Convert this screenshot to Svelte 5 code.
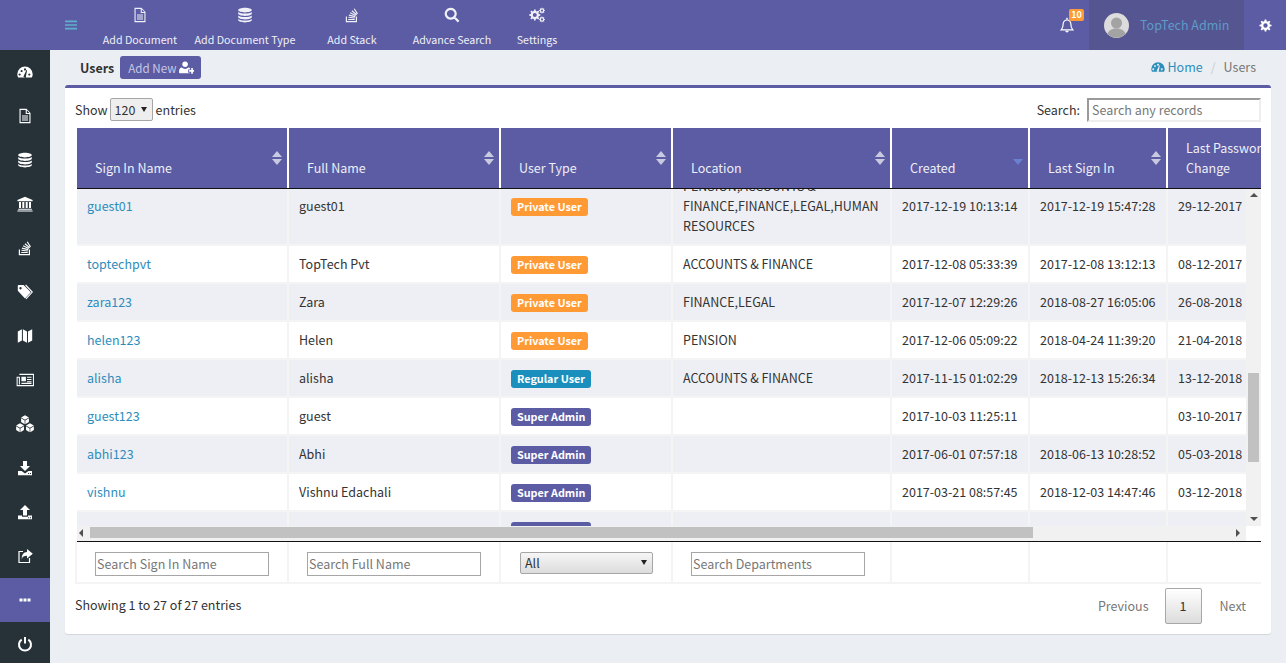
<script lang="ts">
  function gear(cx: number, cy: number, r: number, teeth = 8) {
    const pts: string[] = [];
    const step = (Math.PI * 2) / teeth;
    for (let i = 0; i < teeth; i++) {
      const a = i * step;
      const spots: [number, number][] = [
        [-0.3, 0.74],
        [-0.18, 1],
        [0.18, 1],
        [0.3, 0.74]
      ];
      for (const [o, k] of spots) {
        pts.push(`${(cx + Math.cos(a + o * step) * r * k).toFixed(2)} ${(cy + Math.sin(a + o * step) * r * k).toFixed(2)}`);
      }
    }
    const h = r * 0.36;
    return `M${pts.join('L')}zM${cx - h} ${cy}a${h} ${h} 0 1 0 ${h * 2} 0a${h} ${h} 0 1 0 ${-h * 2} 0z`;
  }

  function cube(x: number, y: number, r: number) {
    const w = r * 0.87;
    const top = `M${x} ${y - r}L${x + w} ${y - r / 2}L${x} ${y - 0.05}L${x - w} ${y - r / 2}z`;
    const left = `M${x - w} ${y - r / 2 + 0.6}L${x - 0.3} ${y + 0.5}V${y + r}L${x - w} ${y + r / 2}z`;
    const right = `M${x + w} ${y - r / 2 + 0.6}L${x + 0.3} ${y + 0.5}V${y + r}L${x + w} ${y + r / 2}z`;
    return top + left + right;
  }

  // f = filled path (evenodd), s = stroked path
  const icons: Record<string, { f?: string; s?: string; w?: number }> = {
    dash: {
      f: 'M8 2.500A7.700 7.700 0 0 0 .3 10.200c0 1.300.3 2.400.9 3.300h13.600c.6-.9.9-2 .9-3.300A7.700 7.700 0 0 0 8 2.500zM2.600 9.400a1.100 1.100 0 1 0 .01 0zM4.600 5.900a1.100 1.100 0 1 0 .01 0zM8 4.300a1.100 1.100 0 1 0 .01 0zM12.300 9.400a1.100 1.100 0 1 0 .01 0zM6.900 11.400 9.400 6l.7.3L9 11.900a1.200 1.200 0 1 1-2.100-.5z'
    },
    file: {
      f: 'M2.500.8h7L13.500 5v10.200h-11zM3.600 1.900v12.200h8.800V6H8.700V1.900zM9.800 2.200V4.900h2.600zM5 7.400h6v1H5zM5 9.400h6v1H5zM5 11.400h6v1H5z'
    },
    db: {
      f: 'M8 .8c3.800 0 6.800 1 6.800 2.300S11.800 5.400 8 5.400 1.200 4.400 1.200 3.100 4.200.8 8 .8zM1.200 4.900C2.500 6 5 6.500 8 6.500s5.500-.5 6.800-1.600v1.700c0 1.300-3 2.400-6.800 2.400S1.200 7.900 1.200 6.600zM1.200 8.400C2.500 9.500 5 10 8 10s5.500-.5 6.800-1.600v1.700c0 1.300-3 2.400-6.800 2.400s-6.800-1.100-6.800-2.400zM1.200 11.900c1.300 1.100 3.800 1.600 6.800 1.600s5.500-.5 6.800-1.600v1.200c0 1.300-3 2.300-6.800 2.300s-6.800-1-6.800-2.300z'
    },
    bank: {
      f: 'M8 .8 15.600 4v1.200H.4V4zM2 6h2v6H2zM5.300 6h2v6h-2zM8.700 6h2v6h-2zM12 6h2v6h-2zM1.200 12.800h13.600v1H1.200zM.4 14.400h15.200v1.200H.4z'
    },
    stack: {
      f: 'M1.800 9.500H3v4.500h8.800V9.500H13v5.700H1.800z',
      s: 'M4.200 12.500h6.500M4.400 10.300l6.400.7M4.900 8.100l6.300 1.500M6.100 5.800l5.700 2.700M7.900 3.700l4.800 4M10.200 1.800l3.300 5.100',
      w: 1.150
    },
    tag: {
      f: 'M.8 1.700v5L8 14.500 13.800 8.300 6.600.9H1.600a.8.800 0 0 0-.8.800zM3.500 3a1.200 1.200 0 1 0 .01 0z',
      s: 'M8.600 1l6.700 7L9 14.800',
      w: 1.100
    },
    map: { f: 'M.8 3.400 4.900 1.300V12.600L.8 14.700zM5.900 1.300 10 3.400V14.700L5.900 12.600zM11 3.400 15.200 1.300V12.600L11 14.700z' },
    news: {
      f: 'M4.800 5h4v4h-4zM9.800 5h4v1h-4zM9.800 7h4v1h-4zM9.800 9h4v1h-4zM4.800 10.500h9v1h-9z',
      s: 'M3 3h12.500v10H1V5.500h2V12',
      w: 0.9
    },
    cubes: { f: cube(8, 4.3, 4) + cube(3.6, 11.4, 4) + cube(12.4, 11.4, 4) },
    down: {
      f: 'M6 1h4v5h3l-5 5-5-5h3zM1 11h3.600L8 13.500 11.400 11H15v4.200H1zM11.100 13h1v1h-1zM13 13h1v1h-1z'
    },
    up: {
      f: 'M8 1l5 5h-3v5.500H6V6H3zM1 11.500h4v1.300h6v-1.300h4v3.700H1zM11.100 13.200h1v1h-1zM13 13.200h1v1h-1z'
    },
    share: {
      f: 'M10 1l5.800 4.800L10 10.600V7.800c-3 0-4.700 1-5.200 3.400C4.500 7 6.500 4.200 10 4z',
      s: 'M6 3.500H2v11h10.500V10',
      w: 1.2
    },
    dots: { f: 'M2.500 6.500h3v3h-3zM6.500 6.500h3v3h-3zM10.500 6.500h3v3h-3z' },
    power: { s: 'M4.700 3.600a6 6 0 1 0 6.600 0M8 1v6.500', w: 2 },
    bell: {
      f: 'M6.300 13.800h3.400a1.700 1.700 0 0 1-3.400 0zM7.300.8h1.400v2H7.300z',
      s: 'M2.200 12.800c1.500-1.500 2-3.200 2-6A3.700 3.700 0 0 1 8 3a3.700 3.700 0 0 1 3.800 3.800c0 2.800.5 4.500 2 6z',
      w: 1.2
    },
    cog: { f: gear(8, 8, 7.5) },
    cogs: { f: gear(5.8, 8, 5.6) + gear(13, 3.6, 3) + gear(13, 12.4, 3) },
    bars: { f: 'M0 2h16v2.200H0zM0 6.900h16v2.200H0zM0 11.800h16V14H0z' },
    search: { s: 'M6.700 1.800a4.900 4.900 0 1 0 .01 0zM10.300 10.300l4.300 4.300', w: 2.2 },
    addUser: {
      f: 'M6.500 1.500a3 3 0 1 0 .01 0zM1 14c-.6 0-1-.4-1-1 0-3 1-5 3-5 1 1 2.200 1.500 3.500 1.500S9 9 10 8c.7 0 1.200.2 1.700.6V10H9.800v3.500h2v.5zM13 8.500h1.800v2.200H17v1.800h-2.200v2.200H13v-2.200h-2.200v-1.800H13z'
    }
  };

  const navItems = [
    { icon: 'file', label: 'Add Document' },
    { icon: 'db', label: 'Add Document Type' },
    { icon: 'stack', label: 'Add Stack' },
    { icon: 'search', label: 'Advance Search' },
    { icon: 'cogs', label: 'Settings' }
  ];

  const sideItems = ['dash', 'file', 'db', 'bank', 'stack', 'tag', 'map', 'news', 'cubes', 'down', 'up', 'share', 'dots', 'power'];
  const bigSideIcons = ['news', 'cubes'];

  const columns = [
    { label: 'Sign In Name', sort: 'both' },
    { label: 'Full Name', sort: 'both' },
    { label: 'User Type', sort: 'both' },
    { label: 'Location', sort: 'both' },
    { label: 'Created', sort: 'desc' },
    { label: 'Last Sign In', sort: 'both' }
  ];

  const PRIVATE = { text: 'Private User', cls: 'orange' };
  const REGULAR = { text: 'Regular User', cls: 'blue' };
  const ADMIN = { text: 'Super Admin', cls: 'purple' };

  const users = [
    { id: 'guest01', name: 'guest01', type: PRIVATE, loc: 'PENSION,ACCOUNTS & FINANCE,FINANCE,LEGAL,HUMAN RESOURCES', created: '2017-12-19 10:13:14', signin: '2017-12-19 15:47:28', pwd: '29-12-2017' },
    { id: 'toptechpvt', name: 'TopTech Pvt', type: PRIVATE, loc: 'ACCOUNTS & FINANCE', created: '2017-12-08 05:33:39', signin: '2017-12-08 13:12:13', pwd: '08-12-2017' },
    { id: 'zara123', name: 'Zara', type: PRIVATE, loc: 'FINANCE,LEGAL', created: '2017-12-07 12:29:26', signin: '2018-08-27 16:05:06', pwd: '26-08-2018' },
    { id: 'helen123', name: 'Helen', type: PRIVATE, loc: 'PENSION', created: '2017-12-06 05:09:22', signin: '2018-04-24 11:39:20', pwd: '21-04-2018' },
    { id: 'alisha', name: 'alisha', type: REGULAR, loc: 'ACCOUNTS & FINANCE', created: '2017-11-15 01:02:29', signin: '2018-12-13 15:26:34', pwd: '13-12-2018' },
    { id: 'guest123', name: 'guest', type: ADMIN, loc: '', created: '2017-10-03 11:25:11', signin: '', pwd: '03-10-2017' },
    { id: 'abhi123', name: 'Abhi', type: ADMIN, loc: '', created: '2017-06-01 07:57:18', signin: '2018-06-13 10:28:52', pwd: '05-03-2018' },
    { id: 'vishnu', name: 'Vishnu Edachali', type: ADMIN, loc: '', created: '2017-03-21 08:57:45', signin: '2018-12-03 14:47:46', pwd: '03-12-2018' },
    { id: '', name: '', type: ADMIN, loc: '', created: '', signin: '', pwd: '' }
  ];
</script>

{#snippet icon(name: string, size = 16)}
  <svg class="icon" width={size} height={size} viewBox="0 0 16 16" aria-hidden="true">
    {#if icons[name].f}
      <path d={icons[name].f} fill="currentColor" fill-rule="evenodd" />
    {/if}
    {#if icons[name].s}
      <path d={icons[name].s} fill="none" stroke="currentColor" stroke-width={icons[name].w} />
    {/if}
  </svg>
{/snippet}

{#snippet colgroup()}
  <colgroup>
    <col class="c-wide" />
    <col class="c-wide" />
    <col class="c-type" />
    <col class="c-loc" />
    <col class="c-date" />
    <col class="c-date" />
    <col class="c-last" />
  </colgroup>
{/snippet}

<div class="page">
  <header class="topbar">
    <button class="toggle" aria-label="Toggle menu">{@render icon('bars', 12)}</button>
    <nav class="quick">
      {#each navItems as item}
        <a class="quick-item" href="#top">
          {@render icon(item.icon, 16)}
          <span>{item.label}</span>
        </a>
      {/each}
    </nav>
    <div class="topbar-right">
      <div class="bell">
        {@render icon('bell', 16)}
        <span class="bell-count">10</span>
      </div>
      <div class="user">
        <svg class="avatar" width="25" height="25" viewBox="0 0 25 25" aria-hidden="true">
          <circle cx="12.5" cy="12.5" r="12.5" fill="#dcdcdc" />
          <circle cx="12.5" cy="10" r="5.5" fill="#a3a3a3" />
          <path d="M3.500 21c1-4 5-5.500 9-5.500s8 1.500 9 5.500a12.500 12.500 0 0 1-18 0z" fill="#a3a3a3" />
        </svg>
        <span>TopTech Admin</span>
      </div>
      <div class="settings">{@render icon('cog', 13)}</div>
    </div>
  </header>

  <div class="main">
    <aside class="sidebar">
      {#each sideItems as name}
        <div class="side-item" class:active={name === 'dots'}>
          {@render icon(name, bigSideIcons.includes(name) ? 18 : 16)}
        </div>
      {/each}
    </aside>

    <section class="content">
      <div class="titlebar">
        <strong>Users</strong>
        <button class="add-new">Add New {@render icon('addUser', 15)}</button>
        <ol class="crumbs">
          <li class="home">{@render icon('dash', 14)} Home</li>
          <li class="sep">/</li>
          <li>Users</li>
        </ol>
      </div>

      <div class="card">
        <div class="controls">
          <div class="length">
            Show
            <span class="select small"><select><option>120</option></select></span>
            entries
          </div>
          <label class="search">
            Search:
            <input class="search-input" placeholder="Search any records" />
          </label>
        </div>

        <div class="grid">
          <div class="grid-head">
            <table>
              {@render colgroup()}
              <thead>
                <tr>
                  {#each columns as col}
                    <th class={col.sort === 'both' ? 'sort-both' : 'sort-desc'}>{col.label}</th>
                  {/each}
                  <th>Last Password<br />Change</th>
                </tr>
              </thead>
            </table>
          </div>

          <div class="grid-body">
            <div class="viewport">
              <table>
                {@render colgroup()}
                <tbody>
                  {#each users as user}
                    <tr>
                      <td><a href="#top">{user.id}</a></td>
                      <td>{user.name}</td>
                      <td><span class="badge {user.type.cls}">{user.type.text}</span></td>
                      <td>{user.loc}</td>
                      <td>{user.created}</td>
                      <td>{user.signin}</td>
                      <td>{user.pwd}</td>
                    </tr>
                  {/each}
                </tbody>
              </table>
            </div>
            <div class="vbar">
              <i class="arrow a-up"></i>
              <i class="thumb"></i>
              <i class="arrow a-down"></i>
            </div>
            <div class="hbar">
              <i class="arrow a-left"></i>
              <i class="thumb"></i>
              <i class="arrow a-right"></i>
            </div>
          </div>

          <div class="grid-foot">
            <table>
              {@render colgroup()}
              <tfoot>
                <tr>
                  <td><input placeholder="Search Sign In Name" /></td>
                  <td><input placeholder="Search Full Name" /></td>
                  <td><span class="select wide"><select><option>All</option></select></span></td>
                  <td><input placeholder="Search Departments" /></td>
                  <td></td>
                  <td></td>
                  <td></td>
                </tr>
              </tfoot>
            </table>
          </div>
        </div>

        <div class="grid-info">
          <div class="info-text">Showing 1 to 27 of 27 entries</div>
          <div class="pager">
            <span>Previous</span>
            <span class="page-current">1</span>
            <span>Next</span>
          </div>
        </div>
      </div>
    </section>
  </div>
</div>

<style>
  :global(body) {
    margin: 0;
    overflow: hidden;
    background: #ebeff3;
  }

  .page {
    height: 663px;
    display: flex;
    flex-direction: column;
    overflow: hidden;
    font-family: 'Noto Sans CJK SC', 'Open Sans', sans-serif;
    font-size: 12.5px;
    line-height: 20px;
    color: #333;
  }

  .icon {
    display: block;
    flex: none;
  }

  /* top bar */
  .topbar {
    height: 50px;
    flex: none;
    display: flex;
    background: #5b5ca3;
    color: #fff;
  }

  .toggle {
    width: 92px;
    padding: 0 15px 0 65px;
    border: 0;
    background: none;
    color: #5fb0cc;
  }

  .quick {
    display: grid;
    grid-template-columns: 96px 114px 100px 100px 70px;
  }

  .quick-item {
    display: flex;
    flex-direction: column;
    align-items: center;
    padding-top: 7px;
    gap: 8px;
    color: #f0f0f8;
    font-size: 10.7px;
    line-height: 18px;
    text-decoration: none;
    white-space: nowrap;
  }

  .topbar-right {
    margin-left: auto;
    display: flex;
    align-items: center;
    height: 100%;
  }

  .bell {
    position: relative;
    width: 43px;
    padding-left: 13px;
    box-sizing: border-box;
  }

  .bell-count {
    position: absolute;
    left: 23px;
    top: -8px;
    width: 15px;
    height: 12px;
    border-radius: 2px;
    background: #ff9a35;
    font-size: 9px;
    font-weight: 700;
    line-height: 12px;
    text-align: center;
  }

  .user {
    width: 155px;
    height: 100%;
    box-sizing: border-box;
    padding-left: 15px;
    display: flex;
    align-items: center;
    gap: 11px;
    background: #555592;
    color: #5b9cc8;
  }

  .settings {
    width: 42px;
    display: flex;
    justify-content: center;
  }

  /* sidebar */
  .main {
    flex: 1;
    display: flex;
    min-height: 0;
  }

  .sidebar {
    width: 50px;
    flex: none;
    background: #263238;
    color: #fff;
  }

  .side-item {
    height: 44px;
    display: flex;
    align-items: center;
    justify-content: center;
  }

  .side-item.active {
    background: #5b5ca3;
  }

  /* content */
  .content {
    flex: 1;
    min-width: 0;
    padding: 0 15px;
  }

  .titlebar {
    height: 35px;
    padding: 0 15px;
    display: flex;
    align-items: center;
    gap: 6px;
  }

  .add-new {
    height: 23px;
    padding: 0 7px 0 8px;
    display: flex;
    align-items: center;
    gap: 3px;
    border: 0;
    border-radius: 3px;
    background: #5b5ca3;
    color: #c6c7e4;
    font: inherit;
    font-size: 11.6px;
  }

  .add-new .icon {
    color: #fff;
  }

  .crumbs {
    margin: 0 0 0 auto;
    padding: 0 0 1px;
    display: flex;
    align-items: center;
    gap: 8px;
    list-style: none;
    color: #777;
  }

  .home {
    display: flex;
    align-items: center;
    gap: 3px;
    color: #2e8dbb;
  }

  .sep {
    color: #ccc;
  }

  .card {
    height: 549px;
    box-sizing: border-box;
    padding: 10px 10px 0;
    border-top: 3px solid #5b5ca3;
    border-radius: 3px;
    background: #fff;
    box-shadow: 0 1px 1px rgba(0, 0, 0, 0.1);
  }

  .controls {
    height: 24px;
    display: flex;
    justify-content: space-between;
    align-items: center;
  }

  .length,
  .search {
    display: flex;
    align-items: center;
    gap: 3px;
  }

  .length {
    padding-bottom: 1px;
  }

  .search {
    gap: 7px;
  }

  .search-input {
    width: 174px;
    height: 24px;
    box-sizing: border-box;
    padding: 0 3px 2px;
    border: 2px solid;
    border-color: #9a9a9a #eee #eee #9a9a9a;
    font: inherit;
  }

  input::placeholder {
    color: #777;
    opacity: 1;
  }

  .select {
    position: relative;
    display: inline-block;
  }

  .select select {
    display: block;
    width: 100%;
    appearance: none;
    box-sizing: border-box;
    padding: 0 0 0 4px;
    border: 1px solid #a6a6a6;
    border-radius: 2px;
    background: linear-gradient(#f6f6f6, #dcdcdc);
    color: #333;
    font: inherit;
  }

  .select::after {
    content: '';
    position: absolute;
    right: 6px;
    top: 50%;
    margin-top: -3px;
    border: 3px solid transparent;
    border-bottom: 0;
    border-top: 5px solid #222;
  }

  .select.small {
    width: 43px;
    height: 23px;
    margin-left: -1px;
  }

  .select.small select {
    height: 23px;
    background: #eee;
  }

  .select.wide {
    display: block;
    width: 133px;
    height: 22px;
    margin-left: 1px;
  }

  .select.wide select {
    height: 22px;
  }

  /* table */
  .grid {
    margin: 6px 0 0 2px;
    width: 1184px;
  }

  table {
    width: 1412px;
    table-layout: fixed;
    border-collapse: separate;
    border-spacing: 0;
  }

  .c-wide {
    width: 212px;
  }

  .c-type {
    width: 172px;
  }

  .c-loc {
    width: 219px;
  }

  .c-date {
    width: 138px;
  }

  .c-last {
    width: 321px;
  }

  .grid-head {
    height: 61px;
    overflow: hidden;
    border-bottom: 1px solid #111;
    box-sizing: border-box;
  }

  th {
    position: relative;
    box-sizing: border-box;
    height: 60px;
    padding: 0 18px 10px;
    border-right: 2px solid #fff;
    background: #5b5ca3;
    color: #eeeef8;
    font-weight: 400;
    text-align: left;
    vertical-align: bottom;
  }

  th.sort-both::before,
  th.sort-both::after,
  th.sort-desc::after {
    content: '';
    position: absolute;
    right: 5px;
    border: 5px solid transparent;
  }

  th.sort-both::before {
    top: 23px;
    border-top: 0;
    border-bottom: 6px solid #c9cadf;
  }

  th.sort-both::after {
    top: 31px;
    border-bottom: 0;
    border-top: 6px solid #c9cadf;
  }

  th.sort-desc::after {
    top: 31px;
    border-bottom: 0;
    border-top: 6px solid #6a80d0;
  }

  .grid-body {
    position: relative;
    height: 352px;
    overflow: hidden;
  }

  .viewport {
    width: 1169px;
    height: 337px;
    overflow: hidden;
  }

  .viewport table {
    margin-top: -21px;
  }

  .viewport td {
    padding: 8px 10px;
    border-right: 2px solid #f4f4f4;
    border-bottom: 2px solid #f4f4f4;
    vertical-align: middle;
  }

  .viewport tr:nth-child(odd) td {
    background: #eeeff4;
  }

  .viewport td a {
    color: #2e8dbb;
    text-decoration: none;
  }

  /* scrollbars */
  .vbar,
  .hbar {
    position: absolute;
    background: #f1f1f1;
  }

  .vbar {
    top: 0;
    right: 0;
    width: 15px;
    height: 337px;
  }

  .hbar {
    left: 0;
    bottom: 0;
    width: 1169px;
    height: 15px;
  }

  .thumb {
    position: absolute;
    background: #c1c1c1;
  }

  .vbar .thumb {
    left: 2px;
    top: 184px;
    width: 11px;
    height: 89px;
  }

  .hbar .thumb {
    left: 13px;
    top: 1px;
    width: 943px;
    height: 11px;
  }

  .arrow {
    position: absolute;
    border: 4px solid transparent;
  }

  .a-up {
    left: 3.5px;
    top: 4px;
    border-top: 0;
    border-bottom: 4px solid #505050;
  }

  .a-down {
    left: 3.5px;
    bottom: 5px;
    border-bottom: 0;
    border-top: 4px solid #505050;
  }

  .a-left {
    left: 2px;
    top: 3px;
    border-left: 0;
    border-right: 4px solid #505050;
  }

  .a-right {
    right: 6px;
    top: 3px;
    border-right: 0;
    border-left: 4px solid #505050;
  }

  .badge {
    display: block;
    width: fit-content;
    height: 18px;
    margin: 2px 0 0;
    padding: 0 6px;
    border-radius: 3px;
    color: #fff;
    font-size: 10.8px;
    font-weight: 700;
    line-height: 16px;
    white-space: nowrap;
  }

  .orange {
    background: #ff9a35;
  }

  .blue {
    background: #1a8fbd;
  }

  .purple {
    background: #5b5ca3;
  }

  .grid-foot {
    overflow: hidden;
    border-top: 1px solid #111;
    border-bottom: 2px solid #f4f4f4;
    box-shadow: -2px 0 0 #f4f4f4;
  }

  .grid-foot td {
    box-sizing: border-box;
    height: 40px;
    padding: 10px 18px 0;
    border-right: 2px solid #f4f4f4;
    vertical-align: top;
  }

  .grid-foot input {
    display: block;
    width: 174px;
    height: 24px;
    box-sizing: border-box;
    padding: 0 1px 2px;
    border: 1px solid #a6a6a6;
    font: inherit;
  }

  .grid-info {
    margin-top: 3px;
    height: 38px;
    display: flex;
    justify-content: space-between;
    align-items: center;
  }

  .info-text {
    padding-bottom: 3px;
  }

  .pager {
    margin-right: 15px;
    display: flex;
    align-items: center;
    gap: 17px;
    color: #777;
  }

  .page-current {
    width: 37px;
    height: 36px;
    margin: 0 1px 0 -1px;
    box-sizing: border-box;
    border: 1px solid #a8a8a8;
    border-radius: 2px;
    background: linear-gradient(#fff, #dcdcdc);
    color: #333;
    line-height: 34px;
    text-align: center;
  }
</style>
